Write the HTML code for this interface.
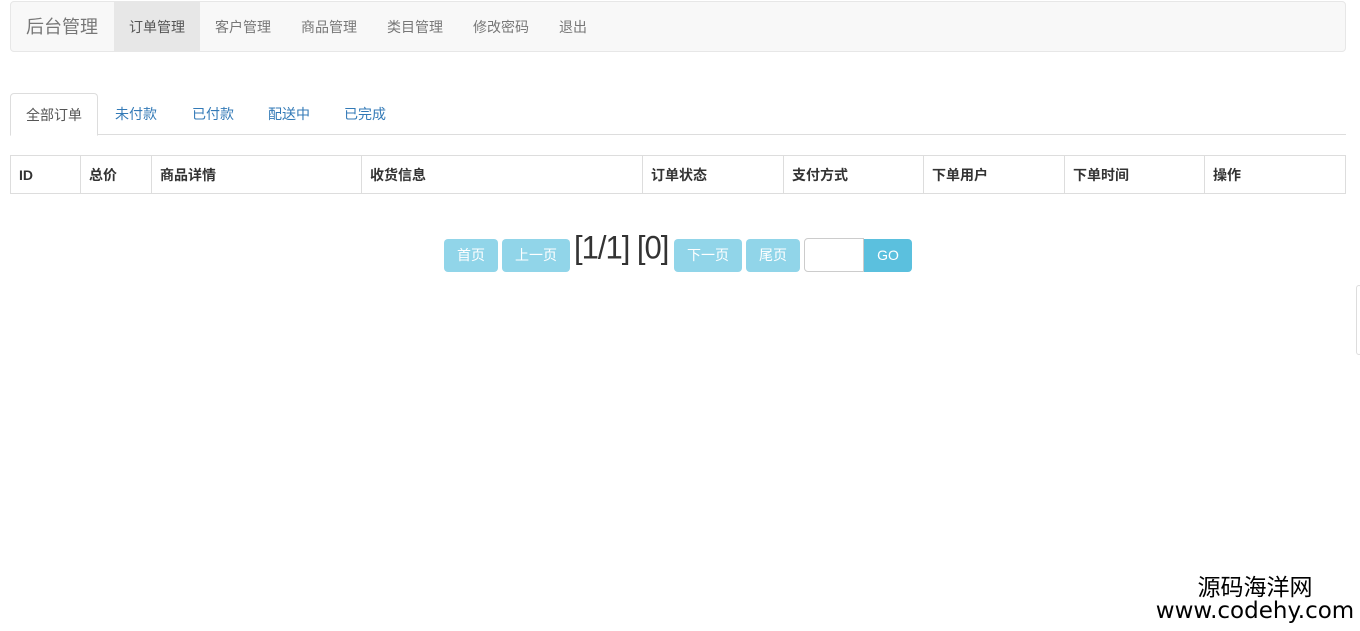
<!DOCTYPE html>
<html><head><meta charset="utf-8"><style>
*{box-sizing:border-box}
body{margin:0;width:1360px;height:631px;background:#fff;font-family:"Liberation Sans","Noto Sans CJK SC",sans-serif;font-size:14px;color:#333;position:relative;overflow:hidden}
.nav{position:absolute;left:10px;top:1px;width:1336px;height:51px;background:#f8f8f8;border:1px solid #e7e7e7;border-radius:4px}
.nav .brand{position:absolute;left:15px;top:0;line-height:50px;font-size:18px;color:#777}
.nav a{position:absolute;top:0;height:49px;line-height:50px;color:#777;font-size:14px;padding:0 15px}
.nav a.act{background:#e7e7e7;color:#555}
.tabs{position:absolute;left:10px;top:93px;width:1336px;height:42px;border-bottom:1px solid #ddd}
.tabs span{position:absolute;top:0;height:42px;line-height:42px;color:#337ab7;padding:0 15px}
.tabs span.act{color:#555;border:1px solid #ddd;border-bottom-color:#fff;border-radius:4px 4px 0 0;height:43px;background:#fff}
table{position:absolute;left:10px;top:155px;width:1336px;border-collapse:collapse}
th{border:1px solid #ddd;height:38px;text-align:left;padding:0 8px;font-weight:bold;font-size:14px;color:#333}
.b{position:absolute;top:239px;height:33px;line-height:33px;text-align:center;background:#91d5e9;color:#fff;border-radius:4px;font-size:14px}
.pg{position:absolute;top:230px;left:574px;font-size:31px;color:#333;letter-spacing:-1px;transform:scaleY(1.05)}
</style></head><body>
<div class="nav">
<div class="brand">后台管理</div>
<a class="act" style="left:103px">订单管理</a>
<a style="left:189px">客户管理</a>
<a style="left:275px">商品管理</a>
<a style="left:361px">类目管理</a>
<a style="left:447px">修改密码</a>
<a style="left:533px">退出</a>
</div>
<div class="tabs">
<span class="act" style="left:0">全部订单</span>
<span style="left:90px">未付款</span>
<span style="left:167px">已付款</span>
<span style="left:243px">配送中</span>
<span style="left:319px">已完成</span>
</div>
<table><tr>
<th style="width:70px">ID</th><th style="width:71px">总价</th><th style="width:210px">商品详情</th><th style="width:281px">收货信息</th><th style="width:141px">订单状态</th><th style="width:140px">支付方式</th><th style="width:141px">下单用户</th><th style="width:140px">下单时间</th><th>操作</th>
</tr></table>
<div class="b" style="left:444px;width:54px">首页</div>
<div class="b" style="left:502px;width:68px">上一页</div>
<div class="pg">[1/1] [0]</div>
<div class="b" style="left:674px;width:68px">下一页</div>
<div class="b" style="left:746px;width:54px">尾页</div>
<div style="position:absolute;left:804px;top:238px;width:60px;height:34px;border:1px solid #ccc;border-radius:4px 0 0 4px"></div>
<div class="b" style="left:864px;width:48px;background:#5bc0de;border-radius:0 4px 4px 0">GO</div>
<div style="position:absolute;left:1356px;top:285px;width:6px;height:70px;border:1px solid #ddd;border-radius:4px;background:#fff"></div>
<div style="position:absolute;left:1150px;top:577px;width:210px;text-align:center;font-size:23px;line-height:23px;color:#000;font-family:'DejaVu Sans','Noto Sans CJK SC',sans-serif">源码海洋网<br>www.codehy.com</div>
</body></html>
